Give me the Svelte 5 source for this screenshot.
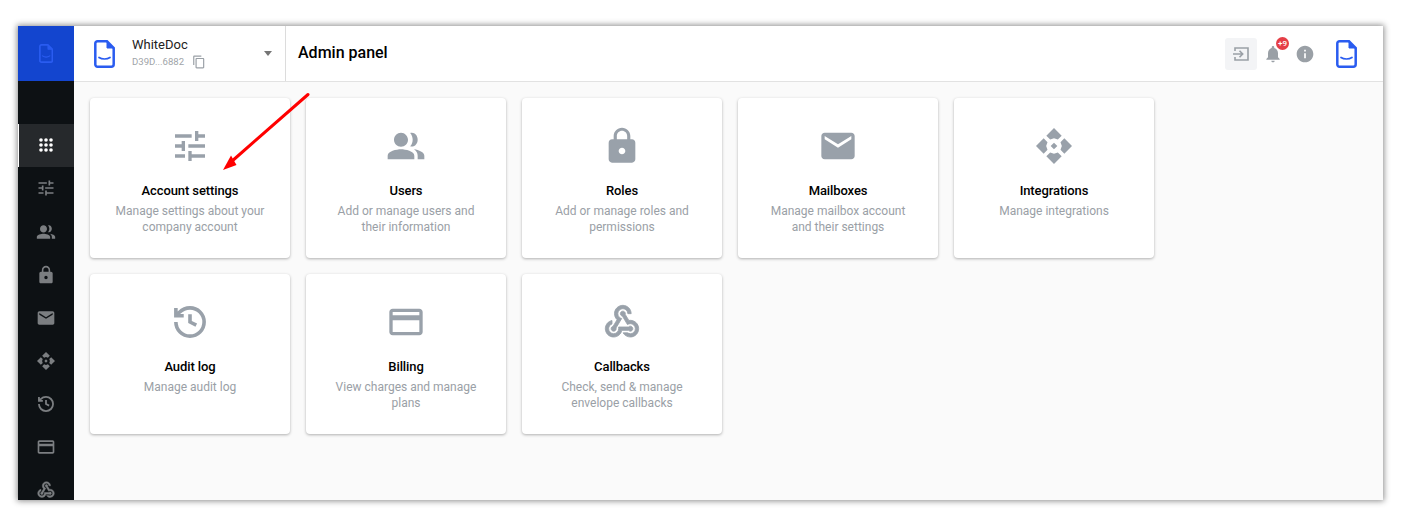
<script lang="ts">
  const icons: Record<string, string> = {
    tune: 'M3 17v2h6v-2H3zM3 5v2h10V5H3zm10 16v-2h8v-2h-8v-2h-2v6h2zM7 9v2H3v2h4v2h2V9H7zm14 4v-2H11v2h10zm-6-4h2V7h4V5h-4V3h-2v6z',
    users: 'M9 12.500c2.300 0 4.200-1.900 4.200-4.200S11.300 4 9 4 4.800 5.900 4.800 8.300 6.700 12.500 9 12.500zm0 1.500c-2.700 0-8 1.200-8 3.800V20h16v-2.200c0-2.600-5.300-3.800-8-3.800zM15.500 12.300c2 0 3.500-1.800 3.500-4.100S17.500 4 15.500 4c-.4 0-.7.100-1 .2 1 1.100 1.500 2.600 1.500 4s-.5 2.900-1.500 4c.3.100.6.100 1 .1zM16.800 14c1.300 1 2.200 2.300 2.200 3.800V20h4v-2.200c0-2-3.300-3.400-6.200-3.800z',
    lock: 'M18 8h-1V6c0-2.760-2.240-5-5-5S7 3.240 7 6v2H6c-1.100 0-2 .9-2 2v10c0 1.100.9 2 2 2h12c1.100 0 2-.9 2-2V10c0-1.100-.9-2-2-2zm-6 9c-1.100 0-2-.9-2-2s.9-2 2-2 2 .9 2 2-.9 2-2 2zm3.100-9H8.900V6c0-1.710 1.390-3.100 3.100-3.100 1.710 0 3.100 1.390 3.100 3.100v2z',
    mail: 'M20 4H4c-1.100 0-1.990.9-1.990 2L2 18c0 1.100.9 2 2 2h16c1.100 0 2-.9 2-2V6c0-1.100-.9-2-2-2zm0 4l-8 5-8-5V6l8 5 8-5v2z',
    integrations: 'M12 1.200l4.600 4.600-2.300 2.300L12 7.300 9.700 8.100 7.400 5.800zM1.200 12l4.600-4.600 2.300 2.300-.8 2.300.8 2.300-2.300 2.300zM22.800 12l-4.600-4.600-2.300 2.300.8 2.300-.8 2.300 2.300 2.300zM12 22.800l-4.600-4.600 2.300-2.300 2.300.8 2.300-.8 2.300 2.300zM12 10l2 2-2 2-2-2z',
    card: 'M20 4H4c-1.110 0-2 .89-2 2v12c0 1.110.89 2 2 2h16c1.110 0 2-.89 2-2V6c0-1.110-.89-2-2-2zm0 14H4v-7h16v7zm0-10H4V6h16v2z',
    webhook: 'M10 15h5.880c.27-.31.67-.5 1.120-.5.83 0 1.500.67 1.500 1.500s-.67 1.500-1.500 1.500c-.44 0-.84-.19-1.120-.5H11.900c-.46 2.280-2.480 4-4.900 4-2.760 0-5-2.240-5-5 0-2.420 1.720-4.440 4-4.900v2.070c-1.160.41-2 1.530-2 2.830 0 1.650 1.350 3 3 3s3-1.350 3-3v-1zm2.500-11c1.650 0 3 1.350 3 3h2c0-2.760-2.240-5-5-5s-5 2.240-5 5c0 1.430.6 2.710 1.550 3.620l-2.350 3.900c-.68.14-1.200.75-1.200 1.480 0 .83.67 1.500 1.500 1.500s1.500-.67 1.500-1.500c0-.16-.02-.31-.07-.45l3.380-5.630C10.490 9.610 9.500 8.420 9.500 7c0-1.650 1.350-3 3-3zm4.500 9c-.64 0-1.230.2-1.720.54l-3.050-5.070C11.530 8.290 11 7.710 11 7c0-.83.67-1.500 1.500-1.500S14 6.170 14 7c0 .15-.02.29-.06.43l2.190 3.640c.28-.05.570-.07.870-.07 2.760 0 5 2.240 5 5s-2.240 5-5 5c-1.850 0-3.470-1.010-4.330-2.500h2.670c.48.320 1.050.5 1.660.5 1.650 0 3-1.350 3-3s-1.350-3-3-3z'
  };

  const history = 'M3 12a9 9 0 1 0 9-9 9.750 9.750 0 0 0-6.740 2.740L3 8M3 3v5h5M12 7v5l4 2';

  const nav = ['apps', 'tune', 'users', 'lock', 'mail', 'integrations', 'history', 'card', 'webhook'];

  const cards = [
    { icon: 'tune', title: 'Account settings', text: 'Manage settings about your company account' },
    { icon: 'users', title: 'Users', text: 'Add or manage users and their information' },
    { icon: 'lock', title: 'Roles', text: 'Add or manage roles and permissions' },
    { icon: 'mail', title: 'Mailboxes', text: 'Manage mailbox account and their settings' },
    { icon: 'integrations', title: 'Integrations', text: 'Manage integrations' },
    { icon: 'history', title: 'Audit log', text: 'Manage audit log' },
    { icon: 'card', title: 'Billing', text: 'View charges and manage plans' },
    { icon: 'webhook', title: 'Callbacks', text: 'Check, send & manage envelope callbacks' }
  ];

  const dots = [0, 1, 2];
  const blue = '#2a5cf0';
</script>

{#snippet logo(size: number, color: string)}
  <svg class="logo" width={size * 0.75} height={size} viewBox="0 0 21 28">
    <path d="M3.500 1.300h9.500l6.700 6.700v16.200a2.500 2.500 0 0 1-2.500 2.500H3.500A2.200 2.200 0 0 1 1.300 24.500V3.500a2.200 2.200 0 0 1 2.200-2.200z" fill="none" stroke={color} stroke-width="2.500" />
    <path d="M13 1.300v6.700h6.700z" fill={color} stroke={color} />
    <path d="M5 17.500c3 2 8 2 11 0" fill="none" stroke={color} stroke-width="1.700" stroke-linecap="round" />
  </svg>
{/snippet}

{#snippet icon(name: string, size: number)}
  {#if name === 'history'}
    <svg width={size} height={size} viewBox="-0.75 -0.75 25.5 25.5" fill="none" stroke="currentColor" stroke-width="2.300" stroke-linecap="butt" stroke-linejoin="miter"><path d={history} /></svg>
  {:else}
    <svg class:thick={name === 'webhook'} width={size} height={size} viewBox="0 0 24 24" fill="currentColor"><path d={icons[name]} /></svg>
  {/if}
{/snippet}

<div class="window">
  <aside class="sidebar">
    <div class="brand">{@render logo(19, blue)}</div>
    <nav class="nav">
      {#each nav as item, i}
        <div class="nav-item" class:active={i === 0}>
          {#if item === 'apps'}
            <svg width="14" height="14" viewBox="0 0 14 14" fill="#fff">
              {#each dots as row}
                {#each dots as col}
                  <circle cx={2 + col * 5} cy={2 + row * 5} r="1.800" />
                {/each}
              {/each}
            </svg>
          {:else}
            {@render icon(item, 20)}
          {/if}
        </div>
      {/each}
    </nav>
  </aside>

  <div class="content">
    <header class="header">
      <div class="account">
        {@render logo(28, blue)}
        <div class="account-text">
          <div class="account-name">WhiteDoc</div>
          <div class="account-id">
            D39D...6882
            <svg width="14" height="14" viewBox="0 0 24 24" fill="#9aa0a6"><path d="M16 1H4c-1.100 0-2 .9-2 2v14h2V3h12V1zm3 4H8c-1.100 0-2 .9-2 2v14c0 1.100.9 2 2 2h11c1.100 0 2-.9 2-2V7c0-1.100-.9-2-2-2zm0 16H8V7h11v14z" /></svg>
          </div>
        </div>
        <span class="caret"></span>
      </div>
      <h1>Admin panel</h1>
      <div class="actions">
        <button class="exit" aria-label="Exit">
          <svg width="18" height="18" viewBox="0 0 18 18" fill="none" stroke="#9aa0a6" stroke-width="1.600">
            <path d="M3 6V3h13v12H3v-3" />
            <path d="M1 9h9M7.500 5.800 10.700 9l-3.200 3.200" />
          </svg>
        </button>
        <div class="bell">
          <svg width="20" height="20" viewBox="0 0 24 24" fill="#9aa0a6"><path d="M12 22c1.100 0 2-.9 2-2h-4c0 1.100.9 2 2 2zm6-6v-5c0-3.070-1.630-5.640-4.500-6.320V4c0-.83-.67-1.500-1.500-1.500s-1.500.67-1.500 1.500v.68C7.640 5.360 6 7.920 6 11v5l-2 2v1h16v-1l-2-2z" /></svg>
          <span class="badge">+9</span>
        </div>
        <svg class="info" width="20" height="20" viewBox="0 0 24 24" fill="#9aa0a6"><path d="M12 2C6.480 2 2 6.480 2 12s4.480 10 10 10 10-4.480 10-10S17.520 2 12 2zm1 15h-2v-6h2v6zm0-8h-2V7h2v2z" /></svg>
        {@render logo(28, blue)}
      </div>
    </header>

    <main class="main">
      <div class="grid">
        {#each cards as card}
          <div class="card">
            <div class="card-icon">{@render icon(card.icon, 40)}</div>
            <div class="card-title">{card.title}</div>
            <div class="card-text">{card.text}</div>
          </div>
        {/each}
      </div>
    </main>
  </div>

  <svg class="arrow" width="90" height="80" viewBox="0 0 90 80">
    <path d="M85 2.500 8 70" stroke="#f00" stroke-width="3" stroke-linecap="round" />
    <path d="M0 78 8 63.500 13.500 73z" fill="#f00" />
  </svg>
</div>

<style>
  :global(body) {
    background: #fff;
    font-family: Roboto, 'Liberation Sans', sans-serif;
  }

  .window {
    position: relative;
    display: flex;
    width: 1365px;
    height: 474px;
    margin: 26px 18px;
    overflow: hidden;
    background: #fafafa;
    box-shadow: 0 0 6px 1px rgba(0, 0, 0, 0.45);
  }

  .logo {
    flex-shrink: 0;
  }

  .thick {
    stroke: currentColor;
    stroke-width: 0.5;
  }

  .sidebar {
    width: 56px;
    flex-shrink: 0;
    background: #0d1114;
  }

  .brand {
    height: 55px;
    background: #1345cf;
    display: flex;
    align-items: center;
    justify-content: center;
  }

  .nav {
    margin-top: 43px;
  }

  .nav-item {
    height: 43.15px;
    box-sizing: border-box;
    padding-bottom: 0.5px;
    display: flex;
    align-items: center;
    justify-content: center;
    color: #7b7e81;
  }

  .nav-item.active {
    background: #26292c;
    box-shadow: inset 1px 0 0 #fff;
  }

  .content {
    flex: 1;
    display: flex;
    flex-direction: column;
    min-width: 0;
  }

  .header {
    height: 56px;
    flex-shrink: 0;
    box-sizing: border-box;
    display: flex;
    align-items: center;
    background: #fff;
    border-bottom: 1px solid #e2e2e2;
  }

  .account {
    width: 212px;
    height: 100%;
    box-sizing: border-box;
    display: flex;
    align-items: center;
    gap: 17px;
    padding: 0 13px 0 20px;
    border-right: 1px solid #dcdcdc;
  }

  .account-text {
    flex: 1;
  }

  .account-name {
    font-size: 13px;
    line-height: 16px;
    color: #222;
    margin-top: -2px;
  }

  .account-id {
    display: flex;
    align-items: center;
    gap: 8px;
    margin-top: 2px;
    font-size: 9.6px;
    line-height: 14px;
    color: #a0a4a8;
  }

  .caret {
    width: 0;
    height: 0;
    border-left: 4.5px solid transparent;
    border-right: 4.5px solid transparent;
    border-top: 5px solid #757575;
  }

  h1 {
    margin: -2px 0 0 12px;
    font-size: 16px;
    font-weight: 500;
    color: #000;
  }

  .actions {
    margin-left: auto;
    display: flex;
    align-items: center;
    gap: 6px;
    padding-right: 26px;
  }

  .exit {
    width: 32px;
    height: 32px;
    padding: 0;
    border: none;
    border-radius: 3px;
    background: #f3f4f6;
    display: flex;
    align-items: center;
    justify-content: center;
  }

  .bell {
    position: relative;
    width: 20px;
    height: 20px;
  }

  .badge {
    position: absolute;
    top: -7px;
    left: 13px;
    width: 13px;
    height: 13px;
    border-radius: 50%;
    background: #e53e46;
    color: #fff;
    font-size: 8px;
    font-weight: 500;
    line-height: 13px;
    text-align: center;
  }

  .info {
    margin-left: 6px;
    margin-right: 15px;
  }

  .main {
    flex: 1;
    padding: 16px;
  }

  .grid {
    display: grid;
    grid-template-columns: repeat(5, 200px);
    grid-auto-rows: 160px;
    gap: 16px;
  }

  .card {
    box-sizing: border-box;
    padding: 28px 22px 0;
    background: #fff;
    border-radius: 4px;
    box-shadow: 0 1px 3px rgba(0, 0, 0, 0.3);
    display: flex;
    flex-direction: column;
    align-items: center;
    text-align: center;
  }

  .card-icon {
    height: 40px;
    color: #99a1aa;
  }

  .card-title {
    margin-top: 17px;
    font-size: 13px;
    font-weight: 500;
    line-height: 16px;
    letter-spacing: -0.1px;
    color: #000;
  }

  .card-text {
    margin-top: 4px;
    font-size: 12px;
    line-height: 16px;
    color: #9aa0a6;
  }

  /* annotation drawn over the screenshot */
  .arrow {
    position: absolute;
    left: 205px;
    top: 66px;
  }
</style>
